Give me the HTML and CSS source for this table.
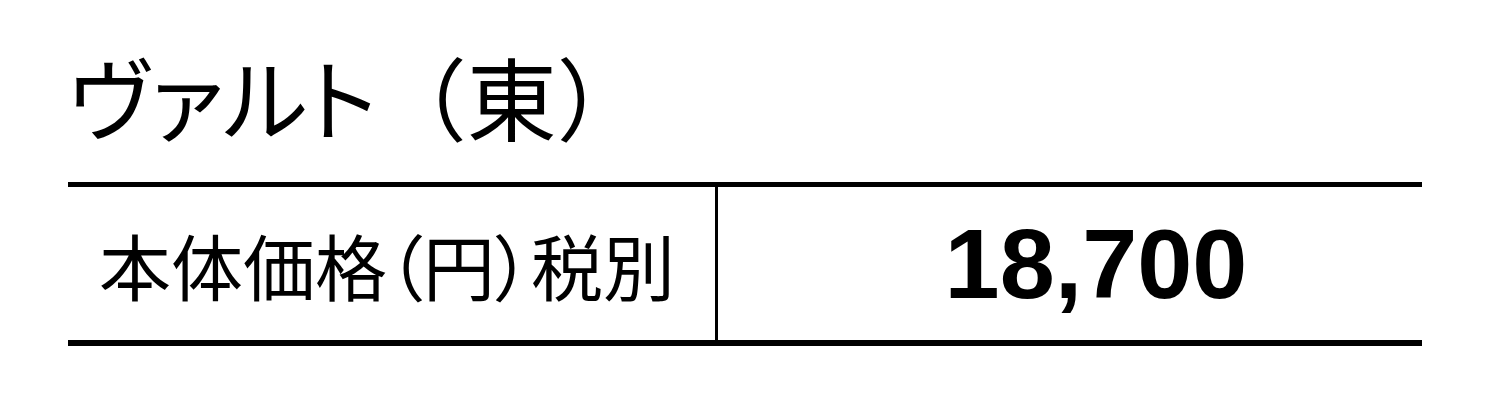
FILE: index.html
```html
<!DOCTYPE html>
<html lang="ja">
<head>
<meta charset="utf-8">
<title>ヴァルト（東）</title>
<link rel="stylesheet" href="styles.css">
</head>
<body>
<div class="page">
  <h1 class="title"><span class="kana">ヴァルト</span>（東）</h1>
  <div class="price-row">
    <div class="label">本体価格（円）税別</div>
    <div class="value">18,700</div>
  </div>
</div>
</body>
</html>
```

FILE: styles.css
```css
html, body {
  margin: 0;
  padding: 0;
  background: #fff;
  color: #000;
}
.page {
  width: 1354px;
  padding: 50px 0 0 68px;
}
.title {
  margin: 0 0 42px 0;
  font-family: "Noto Sans CJK JP", "Noto Sans", sans-serif;
  font-weight: 400;
  font-size: 90px;
  line-height: 90px;
  white-space: nowrap;
}
.kana {
  font-feature-settings: "palt";
}
.price-row {
  display: flex;
  height: 153px;
  border-top: 5px solid #000;
  border-bottom: 6px solid #000;
}
.label {
  width: 650px;
  flex: none;
  box-sizing: border-box;
  padding-right: 9px;
  border-right: 3px solid #000;
  display: flex;
  align-items: center;
  justify-content: center;
  font-family: "Noto Sans CJK JP", "Noto Sans", sans-serif;
  font-size: 72px;
  line-height: 1;
  white-space: nowrap;
  font-feature-settings: "palt";
}
.value {
  flex: 1;
  display: flex;
  align-items: center;
  justify-content: center;
  padding-left: 52px;
  font-family: "Liberation Sans", Arial, sans-serif;
  font-weight: 700;
  font-size: 99px;
  line-height: 1;
}
```
